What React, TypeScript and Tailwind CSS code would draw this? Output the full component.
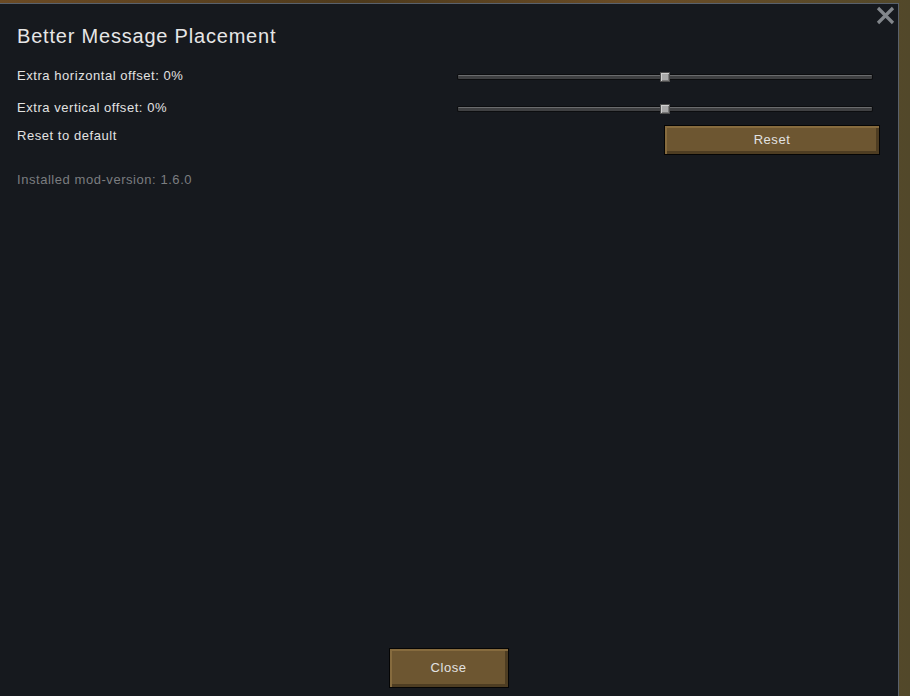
import React from "react";

function Slider() {
  return (
    <div className="relative w-[416px] h-[10px] ml-[8px]">
      <div className="absolute left-0 right-0 top-[2px] h-[6px] rounded-[2px] bg-[#0c0d0f] p-[1px]">
        <div className="h-full w-full rounded-[1px] bg-[#3f4042] border-t border-[#6a6b6d]" />
      </div>
      <div className="absolute left-[203px] top-0 w-[10px] h-[10px] bg-[#a9a9a9] border border-[#4d4d4d] shadow-[inset_1px_1px_0_#d0d0d0,inset_-1px_-1px_0_#7a7a7a]" />
    </div>
  );
}

function BrownButton({ label, className }: { label: string; className: string }) {
  return (
    <div
      className={
        "flex items-center justify-center border border-[#050505] bg-[#6d5631] text-[13px] tracking-[0.55px] text-[#e2e2e2] shadow-[inset_2px_2px_0_#866b3e,inset_-3px_-3px_0_#4e3d22] " +
        className
      }
    >
      {label}
    </div>
  );
}

export default function App() {
  return (
    <div
      className="w-[910px] h-[696px] overflow-hidden bg-[#5a4322] bg-[linear-gradient(90deg,#6b4a24,#4e3a1c_40%,#6a4c26_70%,#52482a)] pt-[3px] pr-[11px]"
      style={{ fontFamily: '"Liberation Sans", Arial, sans-serif' }}
    >
      <div className="relative h-[693px] w-[899px] bg-[#16191e] border-t border-r border-[#59616c] flex flex-col pl-[17px] pr-[18px] pb-[8px]">
        <svg
          className="absolute right-[3px] top-[2px]"
          width="19"
          height="19"
          viewBox="0 0 19 19"
        >
          <path d="M2 2 L17 17 M17 2 L2 17" stroke="#82868b" strokeWidth="3.2" strokeLinecap="butt" />
        </svg>

        <div className="mt-[20px] h-[24px] leading-[24px] text-[20px] tracking-[0.8px] text-[#e6e6e6]">
          Better Message Placement
        </div>

        <div className="mt-[16px] h-[32px] flex">
          <div className="w-[431.5px] mt-[4px] leading-[16px] text-[13px] tracking-[0.55px] text-[#e2e2e2]">
            Extra horizontal offset: 0%
          </div>
          <div className="mt-[8px]">
            <Slider />
          </div>
        </div>

        <div className="h-[28px] flex">
          <div className="w-[431.5px] mt-[4px] leading-[16px] text-[13px] tracking-[0.55px] text-[#e2e2e2]">
            Extra vertical offset: 0%
          </div>
          <div className="mt-[8px]">
            <Slider />
          </div>
        </div>

        <div className="h-[31px] flex justify-between">
          <div className="mt-[4px] leading-[16px] text-[13px] tracking-[0.55px] text-[#e2e2e2]">Reset to default</div>
          <BrownButton label="Reset" className="mt-[1px] w-[216px] h-[30px]" />
        </div>

        <div className="mt-[17px] leading-[16px] text-[13px] tracking-[0.55px] text-[#7b7d80]">
          Installed mod-version: 1.6.0
        </div>

        <div className="mt-auto flex justify-center">
          <BrownButton label="Close" className="w-[120px] h-[40px]" />
        </div>
      </div>
    </div>
  );
}
